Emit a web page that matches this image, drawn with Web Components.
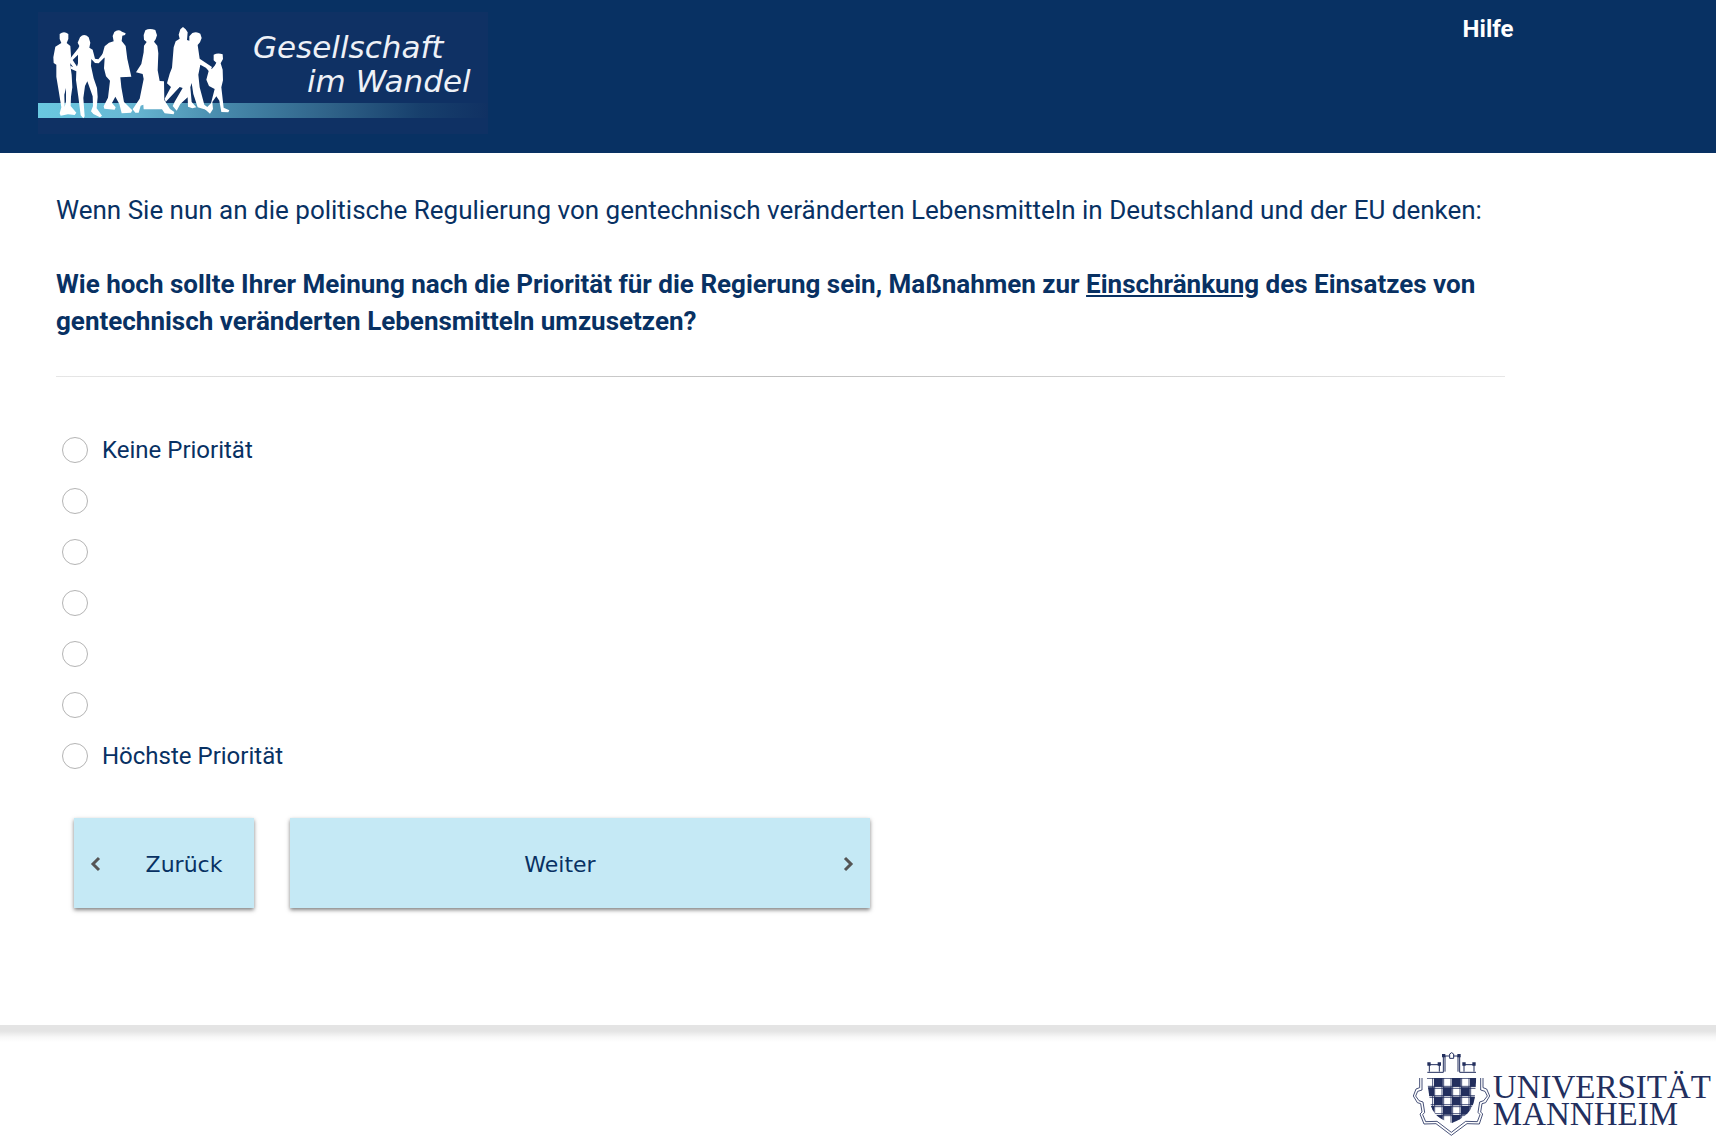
<!DOCTYPE html>
<html lang="de">
<head>
<meta charset="utf-8">
<title>Gesellschaft im Wandel</title>
<style>
  html, body { margin: 0; background: #fff; }
  body { font-family: Roboto, "Liberation Sans", sans-serif; color: #083163; }
</style>
</head>
<body>
<survey-page>
  <survey-header slot="header"></survey-header>
  <survey-question>
    <span slot="intro">Wenn Sie nun an die politische Regulierung von gentechnisch veränderten Lebensmitteln in Deutschland und der EU denken:</span>
    <span slot="question">Wie hoch sollte Ihrer Meinung nach die Priorität für die Regierung sein, Maßnahmen zur <u>Einschränkung</u> des Einsatzes von gentechnisch veränderten Lebensmitteln umzusetzen?</span>
  </survey-question>
  <priority-scale steps="7" first="Keine Priorität" last="Höchste Priorität"></priority-scale>
  <survey-nav></survey-nav>
  <survey-footer slot="footer"></survey-footer>
</survey-page>

<script>
const define = (name, html, setup) => {
  const template = document.createElement('template');
  template.innerHTML = html;
  customElements.define(name, class extends HTMLElement {
    constructor() {
      super();
      this.attachShadow({ mode: 'open' }).append(template.content.cloneNode(true));
    }
    connectedCallback() { if (setup) setup(this, this.shadowRoot); }
  });
};

define('survey-page', `
<style>
  :host { display: flex; flex-direction: column; min-height: 100vh; }
  main { padding: 39px 12.3% 0 56px; flex: 1; }
</style>
<slot name="header"></slot>
<main><slot></slot></main>
<slot name="footer"></slot>`);

define('wandel-logo', `
<style>
  :host { display: block; }
  svg { display: block; }
  text { font: italic 31px "DejaVu Sans", sans-serif; fill: #eef1f7; }
</style>
<svg width="450" height="122" viewBox="0 0 450 122" role="img" aria-label="Gesellschaft im Wandel">
  <defs><linearGradient id="band">
    <stop offset="0" stop-color="#6ac8e0"/><stop offset=".2" stop-color="#68b8d4"/>
    <stop offset=".42" stop-color="#4688aa"/><stop offset=".65" stop-color="#2f6288"/>
    <stop offset=".85" stop-color="#173f6c"/><stop offset="1" stop-color="#103163"/>
  </linearGradient></defs>
  <rect width="450" height="122" fill="#0f3164"/>
  <rect y="91" width="450" height="15" fill="url(#band)"/>
  <g transform="scale(.33333) translate(-24 -36)" fill="#fff">
    <!-- man, standing -->
    <path d="M89 102Q102 92 115 102L115 117L110 129L121 138L123 168L121 196L125 225L127 262L123 290L122 318L139 338L134 345L114 343L92 347L89 340L94 322L86 272L79 230L79 194L71 189L70 172L76 140L94 129L89 117ZM108 264L103 284L104 321L108 304Z" fill-rule="evenodd"/>
    <!-- woman, hand on hip -->
    <path d="M150 112Q162 98 176 112L181 128L178 143L188 149L195 176L205 178L222 157L230 166L206 190L195 189L184 177L183 198L191 235L201 264L203 290L200 325L216 347L210 352L190 342L183 334L189 318L188 289L172 244L165 258L160 294L164 349L160 355L152 346L145 290L138 240L139 214L122 206L121 197L139 206L144 190L144 164L128 180L144 204L138 213L118 186L120 176L145 145L148 138L143 128Z"/>
    <!-- man with cap and coat -->
    <path d="M248 108L253 96Q264 86 276 95L287 100L285 105L277 107L275 123L287 138L292 177L304 230L271 232L274 262L282 306L307 331L303 338L275 340L268 312L256 290L246 309L257 322L254 329L223 326L221 319L234 293L240 242L228 229L222 205L224 174L217 164L224 139L237 128L251 124Z"/>
    <!-- woman with bag and suitcase -->
    <path d="M346 91Q358 83 376 90L381 106L377 118L372 125L382 137L385 160L383 211L389 243L402 244L403 300L420 327L433 336L431 343L404 340L396 328L341 328L340 314L332 317L326 338L316 338L308 328L329 296L341 237L338 222L318 217L334 192L341 157L342 137L350 126L342 119L341 105Z"/>
    <!-- couple, walking -->
    <path d="M451 88L459 81L467 88L473 97L471 120L478 122L478 109L487 99Q500 93 511 101L515 114L510 127L503 135L509 176L546 201L541 211L511 194L505 224L509 262L523 314L533 322L528 329L503 322L490 282L485 249L481 262L485 306L499 322L487 325L474 320L473 292L451 312L440 332L428 318L434 305L458 264L449 261L407 306L404 296L423 261L411 250L419 221L426 203L431 142L437 124L449 116L446 104Z"/>
    <!-- child -->
    <path d="M551 164Q564 158 578 163L579 177L572 190L578 209L579 241L574 262L581 323L598 331L595 337L574 336L568 302L559 289L547 306L549 327L540 341L525 328L543 310L554 267L537 258L529 239L536 213L528 203L546 206L554 197L559 188L551 181Z"/>
  </g>
  <text x="215" y="46">Gesellschaft</text>
  <text x="269" y="80">im Wandel</text>
</svg>`);

define('survey-header', `
<style>
  :host { display: block; background: #083163; color: #fff; }
  header { display: flex; justify-content: space-between; align-items: flex-start; padding: 12px 11.8% 19px 38px; }
  a { color: inherit; font-weight: 700; font-size: 24px; line-height: 34px; text-decoration: none; }
</style>
<header><wandel-logo></wandel-logo><a href="#hilfe">Hilfe</a></header>`);

define('survey-question', `
<style>
  :host { display: block; font-size: 26px; line-height: 37px; }
  p { margin: 0 0 37px; }
  h1 { margin: 0; font-size: inherit; font-weight: 700; }
  hr { border: 0; height: 1px; margin: 36px 0 0; background: linear-gradient(90deg, #e6e6e6, #c0c0c0 50%, #e6e6e6); }
</style>
<p><slot name="intro"></slot></p>
<h1><slot name="question"></slot></h1>
<hr>`);

define('priority-scale', `
<style>
  :host { display: block; margin-top: 47px; font-size: 24px; }
  fieldset { display: flex; flex-direction: column; border: 0; margin: 0; padding: 0 6px; }
  label { display: flex; align-items: center; gap: 14px; height: 51px; }
  input { appearance: none; box-sizing: border-box; width: 26px; height: 26px; margin: 0; border: 1px solid #b4b4b4; border-radius: 50%; background: #fff; }
  input:checked { background: radial-gradient(#083163 0 6px, #fff 7px); }
</style>
<fieldset></fieldset>`, (host, root) => {
  const fieldset = root.querySelector('fieldset');
  fieldset.replaceChildren();
  const steps = Number(host.getAttribute('steps'));
  for (let i = 1; i <= steps; i++) {
    const label = document.createElement('label');
    const input = document.createElement('input');
    const text = document.createElement('span');
    input.type = 'radio';
    input.name = 'priority';
    input.value = i;
    text.textContent = i === 1 ? host.getAttribute('first') : i === steps ? host.getAttribute('last') : '';
    label.append(input, text);
    fieldset.append(label);
  }
});

define('survey-nav', `
<style>
  :host { display: block; margin: 37px 0 0 18px; }
  nav { display: flex; gap: 36px; }
  button { display: flex; align-items: center; height: 90px; border: 0; padding: 2px 16px 0; background: #c5e9f5; color: #083163;
    font: 22px "DejaVu Sans", sans-serif; box-shadow: 0 2px 4px rgba(0,0,0,.5); cursor: pointer; }
  .back { width: 180px; }
  .next { width: 580px; }
  span { flex: 1; text-align: center; }
  .back span { padding-left: 28px; }
  .next span { padding-right: 28px; }
  svg { flex: none; width: 12px; height: 16px; fill: none; stroke: #555; stroke-width: 3; }
</style>
<nav>
  <button class="back" type="button"><svg viewBox="0 0 12 16"><path d="M9 2L3 8L9 14"/></svg><span>Zurück</span></button>
  <button class="next" type="button"><span>Weiter</span><svg viewBox="0 0 12 16"><path d="M3 2L9 8L3 14"/></svg></button>
</nav>`);

define('mannheim-crest', `
<style>:host { display: block; } svg { display: block; }</style>
<svg width="79" height="86" viewBox="36 123 237 258" aria-hidden="true">
  <defs><clipPath id="shield"><path d="M80 204H229L224 265Q216 318 155 339Q100 326 91 280Z"/></clipPath></defs>
  <g fill="none" stroke="#232f5e" stroke-width="3">
    <path d="M82 187H130V138H148M161 138H179V187H228M88 185V162M118 185V162M86 164H120M192 185V162M222 185V162M190 164H224M135 185V138M174 185V138"/>
    <path d="M149 132Q155 124 161 132V145H149Z"/>
    <path stroke-width="2.500" d="M59 204V233L48 237L40 258L52 278L62 281L66 306L60 312L72 342L108 341L154 376L201 341L238 342L248 312L242 306L246 281L257 278L269 258L260 237L249 233V204M66 204V240L53 244L47 258L57 272L69 276L74 307L68 314L77 335L111 334L154 367L197 334L232 335L240 314L234 307L239 276L251 272L262 258L255 244L242 240V204"/>
  </g>
  <path fill="#232f5e" d="M82 157h10v10h-10zM113 157h10v10h-10zM187 157h10v10h-10zM217 157h10v10h-10zM126 132h10v10h-10zM172 132h10v10h-10z"/>
  <g clip-path="url(#shield)">
    <path fill="#fff" d="M80 204h149v136h-149z"/>
    <path fill="#232f5e" d="M102 204h26v26h-26zM156 204h26v26h-26zM210 204h20v26h-20zM80 232h22v26h-22zM129 232h26v26h-26zM183 232h26v26h-26zM102 260h26v26h-26zM156 260h26v26h-26zM210 260h20v26h-20zM80 288h22v26h-22zM129 288h26v26h-26zM183 288h26v26h-26zM102 315h26v26h-26zM156 315h26v26h-26z"/>
    <path fill="none" stroke="#232f5e" stroke-width="2.500" d="M80 205H229M80 229H229M80 235H229M80 257H229M80 262H229M80 284H229M80 290H229M80 311H229M80 317H229M98 204V340M104 204V340M126 204V340M131 204V340M153 204V340M158 204V340M180 204V340M185 204V340M207 204V340M212 204V340"/>
  </g>
</svg>`);

define('survey-footer', `
<style>
  :host { display: block; }
  footer { display: flex; justify-content: flex-end; align-items: flex-start; gap: 2px; height: 96px; padding: 26px 5px 0 0;
    background: linear-gradient(#e4e4e4 0 6px, #f7f7f7 12px, #fff 17px); }
  p { margin: 23px 0 0; color: #232f5e; font: 33px/27px "Liberation Serif", serif; }
  span { display: block; }
</style>
<footer><mannheim-crest></mannheim-crest><p><span>UNIVERSITÄT</span><span>MANNHEIM</span></p></footer>`);
</script>
</body>
</html>
